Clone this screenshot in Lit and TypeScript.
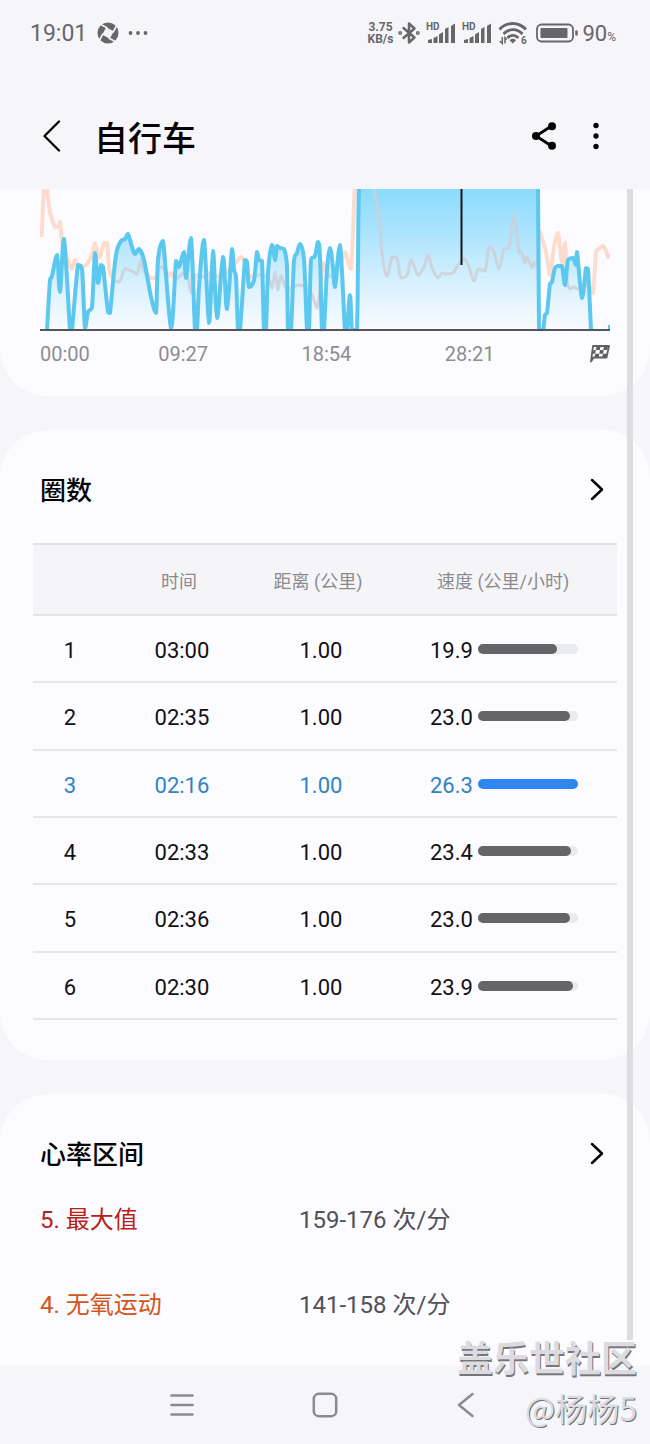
import { LitElement, html, svg, css } from "lit";
import { customElement, property } from "lit/decorators.js";
import { classMap } from "lit/directives/class-map.js";
import { styleMap } from "lit/directives/style-map.js";

type Point = [number, number];

const parse = (s: string): Point[] =>
  s.trim().split(/\s+/).map((p) => p.split(",").map(Number) as Point);

const between = (v: number, a: number, b: number): string =>
  Math.max(Math.min(a, b), Math.min(Math.max(a, b), v)).toFixed(1);

// Catmull-Rom curve through every sample, held inside each segment's box so it never overshoots.
const curve = (pts: Point[]): string => {
  let d = `M${pts[0][0]} ${pts[0][1]}`;
  for (let i = 0; i < pts.length - 1; i++) {
    const p0 = pts[Math.max(i - 1, 0)];
    const p1 = pts[i];
    const p2 = pts[i + 1];
    const p3 = pts[Math.min(i + 2, pts.length - 1)];
    const reach = (p2[0] - p1[0]) / 2;
    const out = Math.min((p2[0] - p0[0]) / 6, reach);
    const back = Math.min((p3[0] - p1[0]) / 6, reach);
    d +=
      `C${between(p1[0] + out, p1[0], p2[0])} ${between(p1[1] + (p2[1] - p0[1]) / 6, p1[1], p2[1])}` +
      ` ${between(p2[0] - back, p1[0], p2[0])} ${between(p2[1] - (p3[1] - p1[1]) / 6, p1[1], p2[1])}` +
      ` ${p2[0]} ${p2[1]}`;
  }
  return d;
};

const SPEED = parse(`
  7,141 10,91 12,87 17,66 20,103 24,50 30,141 32,141 38,76 42,80 45,139 48,123 52,118 55,64 58,94
  61,76 63,78 68,123 70,124 76,66 82,51 85,50 88,45 92,58 95,65 99,60 104,71 111,108 116,124 118,71
  123,52 131,139 136,72 139,78 144,63 146,89 151,49 155,141 157,141 159,98 164,51 169,134 173,62
  177,129 183,68 187,120 192,60 194,81 196,88 198,141 200,141 205,71 207,73 209,98 214,91 217,63
  219,71 222,72 224,141 226,141 228,84 232,56 235,71 237,57 240,59 244,60 247,78 248,141 251,141
  254,71 257,64 260,55 264,71 267,141 269,141 271,71 275,67 278,53 280,68 282,141 284,141 287,81
  290,59 293,78 295,98 300,56 305,141 307,141 310,106 312,141 317,141 319,-2 498,-2 499,141 503,141
  505,126 507,124 510,95 512,93 515,79 518,77 522,77 525,96 528,71 533,69 536,76 537,63 542,109
  546,79 548,80 551,141`);

const HEART = parse(`
  1,48 2,40 4,1 7,1 10,23 15,38 18,38 20,33 22,53 28,71 32,80 35,71 38,76 45,77 52,66 55,54 59,69
  64,54 67,54 69,78 72,88 79,93 85,80 92,82 97,85 101,71 103,80 110,89 116,89 119,78 123,78 127,88
  131,84 136,90 143,84 148,88 151,104 156,86 163,88 170,84 180,88 190,80 198,71 201,68 206,76
  210,88 220,86 228,88 232,99 235,83 238,101 241,86 247,101 258,96 268,99 273,108 277,119 280,100
  283,74 287,84 291,88 296,80 300,76 305,63 308,73 311,80 313,44 315,-3 333,-3 337,18 339,24 342,64 347,87
  352,68 357,69 361,89 367,86 371,71 378,86 384,78 388,66 392,79 398,89 402,84 407,85 413,84
  418,76 424,70 429,78 434,92 438,80 445,82 449,58 454,63 459,80 464,60 469,59 474,26 479,64
  481,62 485,74 487,68 492,79 494,73 497,78 499,42 502,49 507,68 510,86 514,58 518,44 522,74 525,54
  527,91 530,100 534,98 538,100 543,96 549,98 553,104 556,63 559,60 563,57 566,62 568,68 570,65`);

@customElement("trend-chart")
export class TrendChart extends LitElement {
  static styles = css`
    :host { display: block; }
    .plot { display: block; width: 100%; height: 142px; overflow: hidden; }
    .labels {
      display: grid;
      grid-template-columns: 118fr 143fr 143fr 145fr 20px;
      align-items: center;
      margin-top: 11px;
      font-size: 20px;
      line-height: 24px;
      color: #8d8c91;
    }
    .flag { display: block; width: 20px; height: 18px; }
  `;

  render() {
    const speed = curve(SPEED);
    const heart = curve(HEART);
    const area = `${speed}L551 141L7 141Z`;
    return html`
      <svg class="plot" viewBox="0 0 570 142" preserveAspectRatio="none" fill="none">
        <defs>
          <linearGradient id="fill" x1="0" y1="0" x2="0" y2="141" gradientUnits="userSpaceOnUse">
            <stop offset="0" stop-color="#8cdbfd"></stop>
            <stop offset="0.35" stop-color="#b0e5fd"></stop>
            <stop offset="0.7" stop-color="#dcf2fe"></stop>
            <stop offset="1" stop-color="#f9fbff"></stop>
          </linearGradient>
          <clipPath id="under"><path d=${area}></path></clipPath>
        </defs>
        <path d=${heart} stroke="#fcdccd" stroke-width="4" stroke-linejoin="round"></path>
        <path d=${area} fill="url(#fill)"></path>
        <path d=${heart} stroke="#ccd0d8" stroke-opacity="0.85" stroke-width="3" stroke-linejoin="round" clip-path="url(#under)"></path>
        <path d=${speed} stroke="#5cc8f0" stroke-width="4" stroke-linejoin="round"></path>
        <path d="M569 141v-5" stroke="#5cc8f0" stroke-width="2"></path>
        <path d="M421.500 0v76" stroke="#141619" stroke-width="2"></path>
        <path d="M0 141h570" stroke="#55555a" stroke-width="2"></path>
      </svg>
      <div class="labels">
        <span>00:00</span><span>09:27</span><span>18:54</span><span>28:21</span>
        <svg class="flag" viewBox="0 0 20 18">
          <path d="M3 1h16l-2.500 11.500h-13L1 16.500z" fill="none" stroke="#5f5f63" stroke-width="1.800" stroke-linejoin="round"></path>
          <path d="M6.500 1.500h4l-.6 3.500h-4zM14 1.500h4l-.8 3.500h-4zM10 5h3.700l-.7 3.700h-3.700zM3.500 5h2.400l-.8 3.700h-2.400zM5.300 8.700h4l-.8 3.800h-4zM13 8.700h4l-.9 3.800h-3.900z" fill="#5f5f63"></path>
        </svg>
      </div>
    `;
  }
}

interface Lap { n: number; time: string; km: string; speed: string; fill: number; best?: boolean; }

const LAPS: Lap[] = [
  { n: 1, time: "03:00", km: "1.00", speed: "19.9", fill: 79 },
  { n: 2, time: "02:35", km: "1.00", speed: "23.0", fill: 92 },
  { n: 3, time: "02:16", km: "1.00", speed: "26.3", fill: 100, best: true },
  { n: 4, time: "02:33", km: "1.00", speed: "23.4", fill: 93 },
  { n: 5, time: "02:36", km: "1.00", speed: "23.0", fill: 92 },
  { n: 6, time: "02:30", km: "1.00", speed: "23.9", fill: 95 },
];

@customElement("lap-table")
export class LapTable extends LitElement {
  @property({ attribute: false }) laps: Lap[] = [];

  static styles = css`
    :host { display: block; }
    .table {
      width: 100%;
      height: 477px;
      border-collapse: collapse;
      table-layout: fixed;
      font-size: 22px;
      color: #111113;
    }
    .c-n { width: 12.67%; }
    .c-time { width: 25.68%; }
    .c-km { width: 21.92%; }
    .th {
      height: 71px;
      padding: 0 6px 0 0;
      box-sizing: border-box;
      border-top: 2px solid #e2e2e7;
      border-bottom: 2px solid #e2e2e7;
      background: #f5f5f8;
      font-size: 18px;
      font-weight: 400;
      color: #8b8b8f;
      text-align: center;
      white-space: nowrap;
    }
    .th.speed { padding-left: 52px; text-align: left; }
    .td {
      padding: 4px 0 0;
      border-bottom: 2px solid #e5e5ea;
      text-align: center;
    }
    .td.speed { padding-left: 45px; }
    .best { color: #2f83c6; }
    .value { display: flex; align-items: center; gap: 5px; }
    .track {
      width: 100px;
      height: 10px;
      margin-bottom: 3px;
      border-radius: 5px;
      background: #e7ebee;
    }
    .bar { height: 10px; border-radius: 5px; background: #656469; }
    .best .bar { background: #2f86f0; }
  `;

  render() {
    return html`
      <table class="table">
        <colgroup><col class="c-n" /><col class="c-time" /><col class="c-km" /><col /></colgroup>
        <thead>
          <tr>
            <th class="th"></th>
            <th class="th" scope="col">时间</th>
            <th class="th" scope="col">距离 (公里)</th>
            <th class="th speed" scope="col">速度 (公里/小时)</th>
          </tr>
        </thead>
        <tbody>
          ${this.laps.map((l) => html`
            <tr class=${classMap({ best: !!l.best })}>
              <td class="td">${l.n}</td>
              <td class="td">${l.time}</td>
              <td class="td">${l.km}</td>
              <td class="td speed">
                <div class="value">
                  <span>${l.speed}</span>
                  <div class="track"><div class="bar" style=${styleMap({ width: `${l.fill}%` })}></div></div>
                </div>
              </td>
            </tr>`)}
        </tbody>
      </table>
    `;
  }
}

@customElement("status-bar")
export class StatusBar extends LitElement {
  static styles = css`
    :host {
      display: flex;
      align-items: center;
      justify-content: space-between;
      height: 66px;
      padding: 0 34px 0 30px;
      color: #67666b;
    }
    .group { display: flex; align-items: center; }
    .clock { font-size: 23px; line-height: 26px; padding-top: 2px; }
    .app { width: 22px; height: 22px; margin-left: 10px; }
    .dots { width: 20px; height: 6px; margin-left: 9px; }
    .rate { display: grid; font-size: 12px; line-height: 12px; font-weight: 700; text-align: center; }
    .bt { width: 22px; height: 24px; margin-left: 5px; }
    .signal { width: 30px; height: 22px; margin-left: 6px; }
    .wifi { width: 30px; height: 24px; margin-left: 6px; }
    .battery { width: 42px; height: 20px; margin-left: 8px; }
    .level { font-size: 22px; line-height: 26px; margin-left: 4px; padding-top: 2px; }
    .unit { font-size: 12px; margin-top: 7px; }
    .tiny { font: 700 10px Roboto, sans-serif; }
  `;

  private signal() {
    return html`
      <svg class="signal" viewBox="0 0 30 22" fill="currentColor">
        <text class="tiny" x="0" y="8">HD</text>
        <path d="M2 21v-3l4-1v4zM7.500 21v-5l4-2v7zM13 21v-8.500l4-2.500v11zM19 21v-14l3.500-2v16zM25 21v-17l4-2.500v19.500z"></path>
      </svg>`;
  }

  render() {
    return html`
      <div class="group">
        <span class="clock">19:01</span>
        <svg class="app" viewBox="0 0 22 22">
          <circle cx="11" cy="11" r="10.500" fill="currentColor"></circle>
          <g transform="rotate(-18 11 11)" fill="#f6f5fa" stroke="#f6f5fa">
            <path d="M11 5l6 6-6 6-6-6z" stroke="none"></path>
            ${[0, 90, 180, 270].map((a) => svg`
              <path transform="rotate(${a} 11 11)" d="M12 6L6 0" stroke-width="1.700"></path>`)}
          </g>
        </svg>
        <svg class="dots" viewBox="0 0 20 6" fill="currentColor">
          <circle cx="2.500" cy="3" r="1.900"></circle><circle cx="10" cy="3" r="1.900"></circle><circle cx="17.500" cy="3" r="1.900"></circle>
        </svg>
      </div>
      <div class="group">
        <div class="rate"><span>3.75</span><span>KB/s</span></div>
        <svg class="bt" viewBox="0 0 22 24" fill="none" stroke="currentColor" stroke-width="2.500" stroke-linejoin="round" stroke-linecap="round">
          <path d="M5.500 7l11 9.500-5.500 5v-19l5.500 5-11 9.500"></path>
          <circle cx="2.200" cy="12" r=".7"></circle><circle cx="19.800" cy="12" r=".7"></circle>
        </svg>
        ${this.signal()}${this.signal()}
        <svg class="wifi" viewBox="0 0 30 24" fill="none" stroke="currentColor" stroke-width="2.800">
          <path d="M1.500 8.500c7.500-8 19-8 26.500 0M5.500 13c5.500-5.800 13.500-5.800 19 0M9.500 17c3.200-3.600 7.600-3.600 10.800 0"></path>
          <path d="M14.800 22.500l-3.200-3.300c2-1.800 4.400-1.800 6.400 0z" fill="currentColor" stroke="none"></path>
          <path d="M4.300 16v6.500l-2.500-2.500M7 22.500v-6l2 2" stroke-width="1.500"></path>
          <text class="tiny" x="23" y="23" fill="currentColor" stroke="none">6</text>
        </svg>
        <svg class="battery" viewBox="0 0 42 20" fill="none" stroke="currentColor">
          <rect x="1" y="1.500" width="36" height="17" rx="4.500" stroke-width="1.800"></rect>
          <rect x="4.500" y="5" width="27" height="10" rx="1" fill="currentColor" stroke="none"></rect>
          <path d="M40.500 7.500v5" stroke-width="2.500"></path>
        </svg>
        <span class="level">90</span><span class="unit">%</span>
      </div>
    `;
  }
}

const ZONES = [
  { name: "5. 最大值", range: "159-176 次/分", level: "max" },
  { name: "4. 无氧运动", range: "141-158 次/分", level: "anaerobic" },
];

@customElement("app-root")
export class AppRoot extends LitElement {
  static styles = css`
    :host {
      display: flex;
      flex-direction: column;
      position: relative;
      min-height: 100vh;
      background: #f6f5fa;
      font-family: Roboto, "Noto Sans CJK SC", sans-serif;
      color: #050507;
    }
    .btn { padding: 0; border: 0; background: none; color: inherit; font: inherit; cursor: pointer; }
    .icon { display: block; }
    .header {
      display: flex;
      align-items: center;
      height: 123px;
      padding: 0 46px 0 40px;
      box-sizing: border-box;
    }
    .page-title {
      flex: 1;
      margin: 0 0 0 30px;
      padding-top: 22px;
      font-size: 34px;
      line-height: 40px;
      font-weight: 500;
    }
    .header .btn { padding-top: 17px; }
    .more { margin-left: 31px; }
    .main { position: relative; flex: 1; display: flex; flex-direction: column; gap: 34px; }
    .card { border-radius: 48px; background: #fcfbff; }
    .chart { padding: 0 40px 30px; border-radius: 0 0 48px 48px; }
    .laps { padding: 36px 33px 40px; }
    .zones { flex: 1; padding: 36px 33px 0; border-radius: 48px 48px 0 0; }
    .card-head {
      display: flex;
      align-items: center;
      justify-content: space-between;
      width: 100%;
      height: 48px;
      padding: 0 13px 0 7px;
      text-align: left;
    }
    .card-title { padding-top: 2px; font-size: 26px; line-height: 36px; font-weight: 500; }
    .rows { margin-top: 29px; }
    .zone-list { margin: 16px 0 0; padding: 0 7px; }
    .zone {
      display: grid;
      grid-template-columns: 259fr 311fr;
      height: 85px;
      font-size: 24px;
      line-height: 52px;
    }
    .name, .range { margin: 0; }
    .range { color: #515156; }
    .max { color: #b52217; }
    .anaerobic { color: #d0561c; }
    .thumb {
      position: absolute;
      top: 0;
      right: 17px;
      bottom: 26px;
      width: 6px;
      background: #dddce2;
    }
    .nav {
      display: grid;
      grid-template-columns: 254fr 141fr 255fr;
      height: 78px;
      align-items: center;
      color: #8b8a90;
    }
    .nav .btn { display: flex; }
    .recent { justify-content: flex-end; padding-right: 60px; }
    .home { justify-content: center; }
    .prev { padding-left: 61px; }
    .watermark {
      position: absolute;
      right: 13px;
      bottom: 14px;
      color: #dcdce0;
      text-align: right;
      pointer-events: none;
    }
    .site {
      margin: 0;
      font-size: 36px;
      line-height: 48px;
      font-weight: 700;
      text-shadow: 1px 2px 0 #77777b;
    }
    .user {
      margin: 0;
      font: 32px/46px "Noto Sans CJK SC", sans-serif;
      text-shadow: 1px 1px 0 #707074;
    }
  `;

  private cardHead(title: string) {
    return html`
      <button class="btn card-head">
        <span class="card-title" role="heading" aria-level="2">${title}</span>
        <svg class="icon" width="16" height="24" viewBox="0 0 16 24" fill="none" stroke="currentColor" stroke-width="2.500" stroke-linecap="round" stroke-linejoin="round">
          <path d="M4 2l10 9.500L4 21"></path>
        </svg>
      </button>`;
  }

  render() {
    return html`
      <status-bar></status-bar>
      <header class="header">
        <button class="btn" aria-label="返回">
          <svg class="icon" width="24" height="32" viewBox="0 0 24 32" fill="none" stroke="currentColor" stroke-width="2.300" stroke-linecap="round" stroke-linejoin="round">
            <path d="M19 1.500L4.500 16L19 30.500"></path>
          </svg>
        </button>
        <h1 class="page-title">自行车</h1>
        <button class="btn" aria-label="分享">
          <svg class="icon" width="26" height="28" viewBox="0 0 26 28" fill="currentColor">
            <path d="M20.500 4L5 14l15.500 10" fill="none" stroke="currentColor" stroke-width="2.800"></path>
            <circle cx="5" cy="14" r="4"></circle><circle cx="21" cy="4.200" r="4"></circle><circle cx="21" cy="23.800" r="4"></circle>
          </svg>
        </button>
        <button class="btn more" aria-label="更多">
          <svg class="icon" width="16" height="28" viewBox="0 0 16 28" fill="currentColor">
            <circle cx="8" cy="3.500" r="2.700"></circle><circle cx="8" cy="14" r="2.700"></circle><circle cx="8" cy="24.500" r="2.700"></circle>
          </svg>
        </button>
      </header>
      <main class="main">
        <section class="card chart"><trend-chart></trend-chart></section>
        <section class="card laps">
          ${this.cardHead("圈数")}
          <lap-table class="rows" .laps=${LAPS}></lap-table>
        </section>
        <section class="card zones">
          ${this.cardHead("心率区间")}
          <dl class="zone-list">
            ${ZONES.map((z) => html`
              <div class="zone"><dt class="name ${z.level}">${z.name}</dt><dd class="range">${z.range}</dd></div>`)}
          </dl>
        </section>
        <div class="thumb"></div>
      </main>
      <nav class="nav">
        <button class="btn recent" aria-label="最近任务">
          <svg class="icon" width="24" height="24" viewBox="0 0 24 24" stroke="currentColor" stroke-width="2.600" stroke-linecap="round">
            <path d="M1.500 2.500h21M1.500 12h21M1.500 21.500h21"></path>
          </svg>
        </button>
        <button class="btn home" aria-label="主屏幕">
          <svg class="icon" width="26" height="26" viewBox="0 0 26 26" fill="none" stroke="currentColor" stroke-width="2.500">
            <rect x="1.800" y="1.800" width="22.400" height="22.400" rx="5"></rect>
          </svg>
        </button>
        <button class="btn prev" aria-label="后退">
          <svg class="icon" width="20" height="26" viewBox="0 0 20 26" fill="none" stroke="currentColor" stroke-width="2.500" stroke-linecap="round" stroke-linejoin="round">
            <path d="M16.500 2L3 13l13.500 11"></path>
          </svg>
        </button>
      </nav>
      <div class="watermark">
        <p class="site">盖乐世社区</p>
        <p class="user">@杨杨5</p>
      </div>
    `;
  }
}
